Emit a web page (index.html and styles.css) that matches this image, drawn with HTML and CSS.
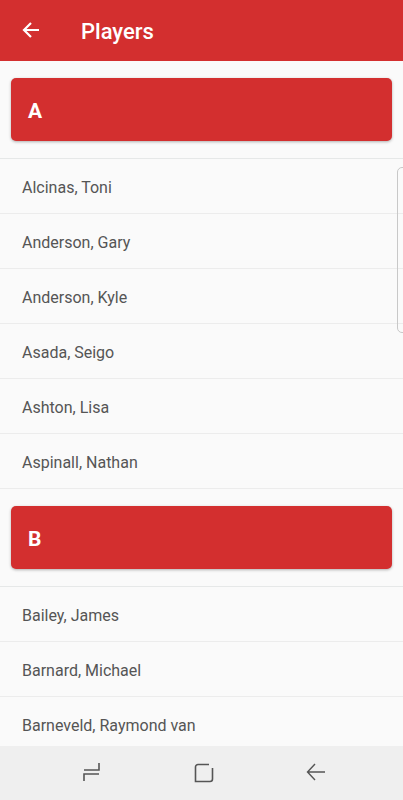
FILE: index.html
```html
<!DOCTYPE html>
<html>
    <head>
        <title>Players</title>
        <link rel="stylesheet" href="styles.css">
    </head>
    <body>
        <div class="screen">
            <div class="appbar">
                <span class="back">
                    <svg width="20" height="20" viewBox="0 0 20 20">
                        <path d="M18 10H3M10 3L3 10L10 17" fill="none" stroke="#fff" stroke-width="2.2"/>
                    </svg>
                </span>
                <span class="title">Players</span>
            </div>

            <div class="list">
                <div class="section">
                    <div class="letter">A</div>
                </div>
                <div class="row">Alcinas, Toni</div>
                <div class="row">Anderson, Gary</div>
                <div class="row">Anderson, Kyle</div>
                <div class="row">Asada, Seigo</div>
                <div class="row">Ashton, Lisa</div>
                <div class="row">Aspinall, Nathan</div>

                <div class="section">
                    <div class="letter">B</div>
                </div>
                <div class="row">Bailey, James</div>
                <div class="row">Barnard, Michael</div>
                <div class="row">Barneveld, Raymond van</div>

                <div class="thumb"></div>
            </div>

            <div class="navbar">
                <svg width="20" height="22" viewBox="0 0 20 22">
                    <path d="M17 1V8H2M2 19V12H17" fill="none" stroke="#555" stroke-width="1.6"/>
                </svg>
                <svg width="20" height="20" viewBox="0 0 20 20">
                    <path d="M15 1.5H4A2.5 2.5 0 0 0 1.5 4V18.5H16A2.5 2.5 0 0 0 18.5 16V5" fill="none" stroke="#555" stroke-width="1.6"/>
                </svg>
                <svg width="20" height="22" viewBox="0 0 20 22">
                    <path d="M19 10H2M9 2L1.5 10L9 18" fill="none" stroke="#555" stroke-width="1.4"/>
                </svg>
            </div>
        </div>
    </body>
</html>
```

FILE: styles.css
```css
html, body {
    margin: 0;
    height: 100%;
}
body {
    font-family: Roboto, "Liberation Sans", sans-serif;
    background-color: #FAFAFA;
}
.screen {
    height: 800px;
    display: flex;
    flex-direction: column;
    overflow: hidden;
}
.appbar {
    height: 61px;
    flex-shrink: 0;
    background-color: #D32F2F;
    display: flex;
    align-items: center;
    padding-left: 21px;
    color: #fff;
}
.back {
    width: 20px;
    height: 20px;
    margin-top: -2px;
}
.title {
    margin-left: 40px;
    font-size: 22px;
    font-weight: 500;
    margin-top: 1px;
}
.list {
    flex: 1;
    overflow: hidden;
    position: relative;
}
.section {
    padding: 17px 11px;
    border-bottom: 1px solid #E6E8E8;
}
.letter {
    height: 63px;
    background-color: #D32F2F;
    border-radius: 5px;
    box-shadow: 0 1px 3px rgba(0,0,0,0.3);
    color: #fff;
    font-size: 21px;
    font-weight: bold;
    display: flex;
    align-items: center;
    padding-left: 17px;
    padding-top: 2px;
    box-sizing: border-box;
}
.row {
    height: 54px;
    border-bottom: 1px solid #ECECEC;
    display: flex;
    align-items: center;
    padding-left: 22px;
    padding-top: 2px;
    box-sizing: border-box;
    height: 55px;
    font-size: 16px;
    color: #555;
}
.thumb {
    position: absolute;
    left: 397px;
    top: 106px;
    width: 12px;
    height: 164px;
    border: 1px solid #C8C8C8;
    border-radius: 5px;
}
.navbar {
    height: 54px;
    flex-shrink: 0;
    background-color: #EFEFEF;
    display: flex;
    justify-content: space-between;
    align-items: center;
    padding: 0 77px 0 82px;
}
```
